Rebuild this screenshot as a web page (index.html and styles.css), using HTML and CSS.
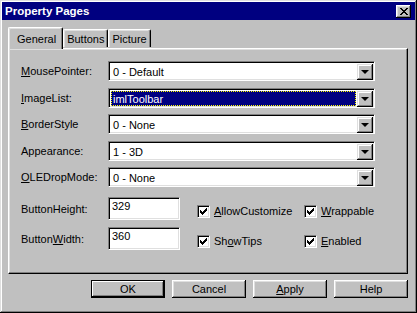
FILE: index.html
```html
<!DOCTYPE html>
<html lang="en">
<head>
  <meta charset="UTF-8" />
  <meta name="viewport" content="width=device-width, initial-scale=1.0" />
  <title>Property Pages</title>
  <link rel="stylesheet" href="styles.css">
</head>
<body>
  <div class="window">
    <div class="titlebar">
      <span class="title">Property Pages</span>
      <button class="close">
        <svg width="8" height="7" viewBox="0 0 8 7" shape-rendering="crispEdges">
          <path d="M0 0h2v1h-2zM6 0h2v1h-2zM1 1h2v1h-2zM5 1h2v1h-2zM2 2h4v1h-4zM3 3h2v1h-2zM2 4h4v1h-4zM1 5h2v1h-2zM5 5h2v1h-2zM0 6h2v1h-2zM6 6h2v1h-2z" fill="#000"/>
        </svg>
      </button>
    </div>

    <div class="main">
      <div class="tabs">
        <div class="tab active">General</div>
        <div class="tab">Buttons</div>
        <div class="tab">Picture</div>
      </div>

      <div class="panel">
        <div class="fields">
          <span class="label"><u>M</u>ousePointer:</span>
          <div class="combo"><span class="value">0 - Default</span><span class="drop"></span></div>

          <span class="label"><u>I</u>mageList:</span>
          <div class="combo"><span class="value selected">imlToolbar</span><span class="drop"></span></div>

          <span class="label"><u>B</u>orderStyle</span>
          <div class="combo"><span class="value">0 - None</span><span class="drop"></span></div>

          <span class="label">Appearance:</span>
          <div class="combo"><span class="value">1 - 3D</span><span class="drop"></span></div>

          <span class="label"><u>O</u>LEDropMode:</span>
          <div class="combo"><span class="value">0 - None</span><span class="drop"></span></div>
        </div>

        <div class="extras">
          <span class="label">ButtonHei<u>g</u>ht:</span>
          <div class="textbox">329</div>
          <div class="check first">
            <span class="box"><svg width="7" height="7" viewBox="0 0 7 7" shape-rendering="crispEdges"><path d="M6 0h1v1h-1zM5 1h2v1h-2zM0 2h1v1h-1zM4 2h3v1h-3zM0 3h2v1h-2zM3 3h3v1h-3zM0 4h5v1h-5zM1 5h3v1h-3zM2 6h1v1h-1z" fill="#000"/></svg></span>
            <span><u>A</u>llowCustomize</span>
          </div>
          <div class="check">
            <span class="box"><svg width="7" height="7" viewBox="0 0 7 7" shape-rendering="crispEdges"><path d="M6 0h1v1h-1zM5 1h2v1h-2zM0 2h1v1h-1zM4 2h3v1h-3zM0 3h2v1h-2zM3 3h3v1h-3zM0 4h5v1h-5zM1 5h3v1h-3zM2 6h1v1h-1z" fill="#000"/></svg></span>
            <span><u>W</u>rappable</span>
          </div>

          <span class="label">Button<u>W</u>idth:</span>
          <div class="textbox">360</div>
          <div class="check first">
            <span class="box"><svg width="7" height="7" viewBox="0 0 7 7" shape-rendering="crispEdges"><path d="M6 0h1v1h-1zM5 1h2v1h-2zM0 2h1v1h-1zM4 2h3v1h-3zM0 3h2v1h-2zM3 3h3v1h-3zM0 4h5v1h-5zM1 5h3v1h-3zM2 6h1v1h-1z" fill="#000"/></svg></span>
            <span>Sh<u>o</u>wTips</span>
          </div>
          <div class="check">
            <span class="box"><svg width="7" height="7" viewBox="0 0 7 7" shape-rendering="crispEdges"><path d="M6 0h1v1h-1zM5 1h2v1h-2zM0 2h1v1h-1zM4 2h3v1h-3zM0 3h2v1h-2zM3 3h3v1h-3zM0 4h5v1h-5zM1 5h3v1h-3zM2 6h1v1h-1z" fill="#000"/></svg></span>
            <span><u>E</u>nabled</span>
          </div>
        </div>
      </div>

      <div class="actions">
        <button class="btn default">OK</button>
        <button class="btn">Cancel</button>
        <button class="btn"><u>A</u>pply</button>
        <button class="btn">Help</button>
      </div>
    </div>
  </div>
</body>
</html>
```

FILE: styles.css
```css
body {
  margin: 0;
  padding: 0;
  background: #c0c0c0;
  font-family: 'Liberation Sans', Arial, sans-serif;
  font-size: 11px;
  color: #000;
}

u {
  text-decoration: underline;
  text-underline-offset: 1px;
}

.window {
  width: 417px;
  height: 313px;
  box-sizing: border-box;
  padding: 2px;
  background: #c0c0c0;
  box-shadow: inset -1px -1px #000, inset 1px 1px #dfdfdf,
              inset -2px -2px #808080, inset 2px 2px #fff;
  display: flex;
  flex-direction: column;
}

.titlebar {
  height: 18px;
  background: #000080;
  display: flex;
  align-items: center;
  justify-content: space-between;
  padding: 0 4px 0 3px;
}

.title {
  color: #fff;
  font-weight: bold;
  font-size: 11.5px;
}

.close {
  width: 15px;
  height: 13px;
  padding: 0;
  border: none;
  background: #c0c0c0;
  box-shadow: inset -1px -1px #000, inset 1px 1px #fff,
              inset -2px -2px #808080, inset 2px 2px #dfdfdf;
  display: flex;
  align-items: center;
  justify-content: center;
}

.main {
  padding: 7px 7px 0 6px;
}

/* tabs */
.tabs {
  display: flex;
  align-items: flex-end;
  height: 21px;
  position: relative;
  z-index: 1;
}

.tab {
  height: 18px;
  box-sizing: border-box;
  padding: 0 3px;
  display: flex;
  align-items: center;
  border-top: 1px solid #fff;
  border-left: 1px solid #fff;
  border-right: 1px solid #000;
  border-radius: 2px 2px 0 0;
  box-shadow: inset -1px 0 #808080, inset 1px 1px #dfdfdf;
  margin-bottom: 1px;
}

.tab.active {
  height: 22px;
  padding: 0 6px 0 8px;
  margin-bottom: -1px;
  background: #c0c0c0;
}

/* page */
.panel {
  height: 226px;
  box-sizing: border-box;
  border: 1px solid;
  border-color: #fff #000 #000 #fff;
  box-shadow: inset -1px -1px #808080, inset 1px 1px #dfdfdf;
  padding: 12px 0 0 12px;
}

.fields {
  display: grid;
  grid-template-columns: 87px 267px;
  row-gap: 6.5px;
  align-items: center;
}

.combo {
  height: 20px;
  box-sizing: border-box;
  background: #fff;
  border: 1px solid;
  border-color: #808080 #fff #fff #808080;
  box-shadow: inset 1px 1px #000, inset -1px -1px #dfdfdf;
  padding: 1px;
  display: flex;
}

.value {
  flex: 1;
  padding-left: 2px;
  line-height: 16px;
  margin-top: 1px;
  margin-left: 1px;
}

.value.selected {
  background: #000080;
  color: #fff;
  outline: 1px dotted #ffff00;
  outline-offset: -1px;
  margin-right: 1px;
}

.drop {
  width: 16px;
  height: 16px;
  margin-top: 1px;
  background: #c0c0c0;
  box-shadow: inset -1px -1px #000, inset 1px 1px #dfdfdf,
              inset -2px -2px #808080, inset 2px 2px #fff;
  display: flex;
  align-items: center;
  justify-content: center;
}

.drop::after {
  content: '';
  border-style: solid;
  border-width: 4px 4px 0;
  border-color: #000 transparent transparent;
}

/* lower section */
.extras {
  display: grid;
  grid-template-columns: 87px 72px 124px auto;
  row-gap: 7px;
  align-items: center;
  margin-top: 10px;
}

.textbox {
  height: 23px;
  box-sizing: border-box;
  background: #fff;
  border: 1px solid;
  border-color: #808080 #fff #fff #808080;
  box-shadow: inset 1px 1px #000, inset -1px -1px #dfdfdf;
  padding: 2px 3px;
  line-height: 13px;
}

.check {
  display: flex;
  align-items: center;
  gap: 4px;
  margin-top: 5px;
  white-space: nowrap;
}

.check.first {
  padding-left: 17px;
}

.box {
  flex-shrink: 0;
  width: 13px;
  height: 13px;
  box-sizing: border-box;
  background: #fff;
  border: 1px solid;
  border-color: #808080 #fff #fff #808080;
  box-shadow: inset 1px 1px #000, inset -1px -1px #dfdfdf;
  padding: 2px 0 0 2px;
}

.box svg {
  display: block;
}

/* dialog buttons */
.actions {
  display: flex;
  justify-content: flex-end;
  gap: 7px;
  margin-top: 6px;
}

.btn {
  width: 74px;
  height: 18px;
  padding: 0;
  border: none;
  background: #c0c0c0;
  font-family: 'Liberation Sans', Arial, sans-serif;
  font-size: 11px;
  color: #000;
  box-shadow: inset -1px -1px #000, inset 1px 1px #fff,
              inset -2px -2px #808080, inset 2px 2px #dfdfdf;
}

.btn.default {
  box-shadow: inset 0 0 0 1px #000, inset -2px -2px #000, inset 2px 2px #fff,
              inset -3px -3px #808080;
}
```
